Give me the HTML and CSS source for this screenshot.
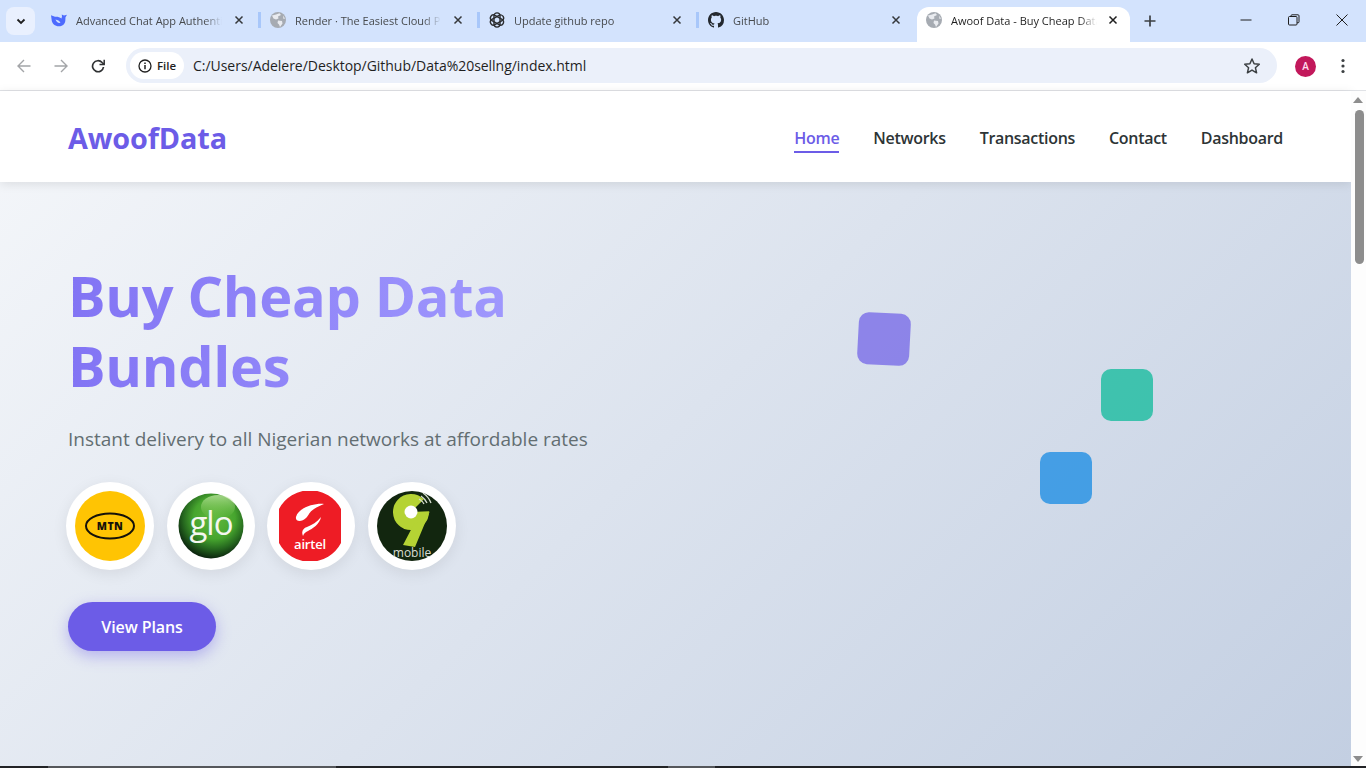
FILE: index.html
```html
<!DOCTYPE html>
<html lang="en">
<head>
<meta charset="utf-8">
<title>Awoof Data - Buy Cheap Data</title>
<link rel="stylesheet" href="styles.css">
</head>
<body>
<svg class="defs" width="0" height="0"><defs>
  <g id="globe"><circle cx="8" cy="8" r="8" fill="#a6abb2"/><path d="M2 3.500 6 2.500 9.500 1.200 11 3 8 4.500 8.500 6.500 6 7.500 3.500 6.500zM8 8.500l4 .5.500 2.500-2.500 3.500-1-2.500-1.500-1.500zM13 3.500l2 3-1.500.5z" fill="#e9ebef"/></g>
  <path id="x" d="M1.500 1.500l7 7M8.500 1.500l-7 7" fill="none" stroke-width="1.500"/>
</defs></svg>
<div class="browser">
  <div class="tabstrip">
    <button class="tabsearch"><svg width="12" height="12" viewBox="0 0 12 12"><path d="M2.500 4.500 6 8l3.500-3.500" fill="none" stroke="#1f1f1f" stroke-width="1.800"/></svg></button>
    <div class="tab">
      <svg class="fav" viewBox="0 0 16 16"><path d="M0 3.200 4 4.800C6 4.400 8.500 5 10.500 6.500L11 4.200 10.700 2.500 13 3.400 16 2.800 14.500 5.200 14.300 9C13.800 12.500 11 14.300 8 14.300 4 14.300 .8 11.500 .6 7.500z" fill="#4d6bfe"/><path d="M4.500 7.500c2 .3 4 1.500 5 3.300-2.200.6-4.300-1-5-3.300z" fill="#d3e3fd"/></svg>
      <span class="title">Advanced Chat App Authentication</span>
      <svg class="close" viewBox="0 0 10 10"><use href="#x"/></svg><i class="sep"></i>
    </div>
    <div class="tab">
      <svg class="fav" viewBox="0 0 16 16"><use href="#globe"/></svg>
      <span class="title">Render · The Easiest Cloud Platform</span>
      <svg class="close" viewBox="0 0 10 10"><use href="#x"/></svg><i class="sep"></i>
    </div>
    <div class="tab">
      <svg class="fav" viewBox="0 0 16 16" fill="none" stroke="#2b2d30" stroke-width="1.400"><rect x="5" y=".9" width="6" height="14.200" rx="3"/><rect x="5" y=".9" width="6" height="14.200" rx="3" transform="rotate(60 8 8)"/><rect x="5" y=".9" width="6" height="14.200" rx="3" transform="rotate(120 8 8)"/></svg>
      <span class="title">Update github repo</span>
      <svg class="close" viewBox="0 0 10 10"><use href="#x"/></svg><i class="sep"></i>
    </div>
    <div class="tab">
      <svg class="fav" viewBox="0 0 16 16"><path fill="#24292f" d="M8 0C3.58 0 0 3.58 0 8c0 3.54 2.29 6.53 5.47 7.59.4.07.55-.17.55-.38 0-.19-.01-.82-.01-1.49-2.010.37-2.530-.49-2.690-.94-.09-.23-.48-.94-.82-1.130-.28-.15-.68-.52-.01-.53.63-.01 1.080.58 1.230.82.72 1.210 1.870.87 2.330.66.07-.52.28-.87.51-1.070-1.780-.2-3.640-.89-3.640-3.950 0-.87.31-1.590.82-2.150-.08-.2-.36-1.020.08-2.120 0 0 .67-.21 2.200.82.64-.18 1.320-.27 2-.27.68 0 1.360.09 2 .27 1.530-1.040 2.200-.82 2.200-.82.44 1.100.16 1.920.08 2.120.51.56.82 1.270.82 2.150 0 3.070-1.870 3.750-3.650 3.950.29.25.54.73.54 1.480 0 1.070-.01 1.930-.01 2.200 0 .21.15.46.55.38A8.013 8.013 0 0 0 16 8c0-4.420-3.580-8-8-8z"/></svg>
      <span class="title">GitHub</span>
      <svg class="close" viewBox="0 0 10 10"><use href="#x"/></svg>
    </div>
    <div class="tab tab-active">
      <svg class="fav" viewBox="0 0 16 16"><use href="#globe"/></svg>
      <span class="title">Awoof Data - Buy Cheap Data Bundles</span>
      <svg class="close" viewBox="0 0 10 10"><use href="#x"/></svg>
    </div>
    <span class="newtab"><svg width="14" height="14" viewBox="0 0 14 14"><path d="M7 1.500v11M1.500 7h11" stroke="#3c4043" stroke-width="1.700"/></svg></span>
    <div class="wincontrols">
      <svg width="12" height="12" viewBox="0 0 12 12"><path d="M.500 6h11" stroke="#1f1f1f"/></svg>
      <svg width="12" height="12" viewBox="0 0 12 12" fill="none" stroke="#1f1f1f"><rect x=".500" y="2.500" width="8.500" height="8.500" rx="1"/><path d="M3 2.500V1.800a1 1 0 0 1 1-1h6a1 1 0 0 1 1 1v6a1 1 0 0 1-1 1h-1"/></svg>
      <svg width="12" height="12" viewBox="0 0 12 12"><path d="M.500.500l11 11M11.500.500l-11 11" stroke="#1f1f1f" fill="none"/></svg>
    </div>
  </div>
  <div class="toolbar">
    <svg class="tool" width="14" height="14" viewBox="0 0 14 14" fill="none" stroke="#a3a5a8" stroke-width="1.400"><path d="M13.500 7H1M7 1 1 7l6 6"/></svg>
    <svg class="tool" width="14" height="14" viewBox="0 0 14 14" fill="none" stroke="#a3a5a8" stroke-width="1.400"><path d="M.500 7H13M7 1l6 6-6 6"/></svg>
    <svg class="tool" width="14" height="14" viewBox="0 0 14 14" fill="none" stroke="#2f3133" stroke-width="1.700"><path d="M12.500 8a5.500 5.500 0 1 1-1.400-4.500L13 5.300"/><path d="M13.200.8v4.700H8.500" stroke-width="1.500"/></svg>
    <div class="omnibox">
      <div class="chip">
        <svg width="14" height="14" viewBox="0 0 14 14" fill="none" stroke="#1f1f1f" stroke-width="1.300"><circle cx="7" cy="7" r="6"/><path d="M7 6v4.200" stroke-width="1.500"/><path d="M7 3.400v1.500" stroke-width="1.500"/></svg>
        <span>File</span>
      </div>
      <span class="url">C:/Users/Adelere/Desktop/Github/Data%20sellng/index.html</span>
      <svg class="star" width="18" height="18" viewBox="0 0 18 18"><path d="M9 2l2.100 4.800 5.200.5-3.900 3.400 1.200 5.100L9 13.100 4.400 15.800l1.200-5.100L1.700 7.300l5.200-.5z" fill="none" stroke="#3c4043" stroke-width="1.500" stroke-linejoin="round"/></svg>
    </div>
    <span class="avatar">A</span>
    <svg class="kebab" width="4" height="16" viewBox="0 0 4 16"><circle cx="2" cy="2.500" r="1.600" fill="#3c4043"/><circle cx="2" cy="8" r="1.600" fill="#3c4043"/><circle cx="2" cy="13.500" r="1.600" fill="#3c4043"/></svg>
  </div>
  <div class="viewport">
    <main class="page">
      <header class="navbar">
        <a class="logo">AwoofData</a>
        <nav class="navlinks">
          <a class="navlink navlink-active">Home</a>
          <a class="navlink">Networks</a>
          <a class="navlink">Transactions</a>
          <a class="navlink">Contact</a>
          <a class="navlink">Dashboard</a>
        </nav>
      </header>
      <section class="hero">
        <div class="hero-text">
          <h1>Buy Cheap Data Bundles</h1>
          <p class="subtitle">Instant delivery to all Nigerian networks at affordable rates</p>
          <div class="networks">
            <div class="netlogo">
              <svg width="70" height="70" viewBox="0 0 70 70"><circle cx="35" cy="35" r="35" fill="#ffc403"/><ellipse cx="35" cy="35" rx="24" ry="12.500" fill="none" stroke="#15120a" stroke-width="2"/><text x="35" y="39" text-anchor="middle" class="mtn-text">MTN</text></svg>
            </div>
            <div class="netlogo">
              <svg width="70" height="70" viewBox="0 0 70 70"><defs><radialGradient id="gloG" cx=".55" cy=".38" r=".64"><stop offset="0" stop-color="#62b83e"/><stop offset=".5" stop-color="#46a52e"/><stop offset=".74" stop-color="#26691f"/><stop offset="1" stop-color="#081c0c"/></radialGradient><linearGradient id="gloH" x1="0" y1="0" x2="0" y2="1"><stop offset="0" stop-color="#cdeeb0" stop-opacity=".7"/><stop offset="1" stop-color="#8fd35a" stop-opacity="0"/></linearGradient></defs><circle cx="35" cy="35" r="32.500" fill="url(#gloG)"/><ellipse cx="42" cy="16" rx="17" ry="12" fill="url(#gloH)"/><text x="35" y="44" text-anchor="middle" class="glo-text">glo</text></svg>
            </div>
            <div class="netlogo">
              <svg width="70" height="70" viewBox="0 0 70 70"><path d="M3 18A35 35 0 0 1 65 18V52A35 35 0 0 1 3 52z" fill="#ee1c25"/><path d="M48 13C38 12 22 17 20 26 19 31 26 31 30 27 33 24 33 21 38 18 41 16 45 14 48 13zM45 26C44 33 36 38 32 40 30 41 28 42 27 45 25 41 27 37 31 36 36 34 41 31 45 26z" fill="#fff"/><text x="34" y="58" text-anchor="middle" class="airtel-text">airtel</text></svg>
            </div>
            <div class="netlogo">
              <svg width="70" height="70" viewBox="0 0 70 70"><circle cx="35" cy="35" r="35" fill="#12260f"/><circle cx="34" cy="21" r="12" fill="none" stroke="#b5d334" stroke-width="12" stroke-dasharray="66 9.400" transform="rotate(-2 34 21)"/><circle cx="34" cy="21" r="6.500" fill="#fff"/><path d="M53 20 38 56 26 54 37 33 46 30z" fill="#b5d334"/><path d="M42 8a13 13 0 0 1 5 5M44 5a17 17 0 0 1 6 7M46 2a21 21 0 0 1 8 10" fill="none" stroke="#d6dccf" stroke-width="1.300"/><text x="35" y="66" text-anchor="middle" class="mobile-text">mobile</text></svg>
            </div>
          </div>
          <a class="cta">View Plans</a>
        </div>
        <div class="hero-art">
          <span class="float float-purple"></span>
          <span class="float float-teal"></span>
          <span class="float float-blue"></span>
        </div>
      </section>
    </main>
    <div class="scrollbar">
      <i class="arrow arrow-up"></i>
      <i class="thumb"></i>
      <i class="arrow arrow-down"></i>
    </div>
  </div>
  <div class="taskedge"><i class="edge-a"></i><i class="edge-b"></i></div>
</div>
</body>
</html>
```

FILE: styles.css
```css
* { box-sizing: border-box; }
html, body { margin: 0; height: 100%; overflow: hidden; }
body { font-family: "Open Sans", "Noto Sans", sans-serif; color: #2d3436; }
a { text-decoration: none; }
.defs { position: absolute; }
.browser { display: flex; flex-direction: column; height: 768px; width: 1366px; }

/* tab strip */
.tabstrip { height: 42px; background: #d3e3fd; display: flex; align-items: flex-start; padding: 7px 0 0 6px; flex: none; }
.tabsearch { width: 29px; height: 28px; margin-right: 6px; border: 0; padding: 0; border-radius: 8px; background: #e9f0fe; display: flex; align-items: center; justify-content: center; flex: none; }
.tab { width: 219px; height: 28px; flex: none; display: flex; align-items: center; padding: 0 0 2px 10px; font-size: 11px; color: #474a4d; }
.fav { width: 16px; height: 16px; flex: none; margin-right: 9px; }
.title { width: 146px; white-space: nowrap; overflow: hidden; flex: none; -webkit-mask-image: linear-gradient(90deg, #000 88%, transparent); mask-image: linear-gradient(90deg, #000 88%, transparent); }
.close { width: 10px; height: 10px; margin-left: 12px; stroke: #35383b; flex: none; }
.sep { width: 3px; height: 16px; margin-left: 14px; background: #a8c7fa; flex: none; }
.tab-active { width: 213px; height: 35px; background: #fff; border-radius: 12px 12px 0 0; margin-bottom: -7px; padding: 0 0 9px 9px; color: #1f1f1f; }
.tab-active .close { margin-left: 11px; stroke: #1f1f1f; }
.newtab { margin: 0 0 0 13px; width: 14px; height: 28px; display: flex; align-items: center; flex: none; }
.wincontrols { margin-left: auto; display: flex; gap: 36px; padding: 0 18px 0 0; height: 26px; align-items: center; }

/* toolbar */
.toolbar { height: 49px; flex: none; background: #fff; border-bottom: 1px solid #e0e2e6; border-radius: 8px 8px 0 0; display: flex; align-items: center; padding: 0 0 0 17px; }
.tool { margin-right: 23px; flex: none; }
.tool:nth-child(3) { margin-right: 21px; }
.omnibox { width: 1151px; height: 35px; margin-bottom: 1px; background: #ebf0fa; border-radius: 18px; display: flex; align-items: center; padding-left: 4px; flex: none; }
.chip { height: 27px; width: 54px; background: #fff; border-radius: 14px; display: flex; align-items: center; justify-content: center; gap: 5px; font-size: 11.500px; font-weight: 600; color: #1f1f1f; flex: none; }
.url { font-size: 14px; color: #1f1f1f; margin-left: 9px; letter-spacing: -.03px; white-space: nowrap; }
.star { margin-left: auto; margin-right: 16px; }
.avatar { width: 21px; height: 21px; margin-left: 18px; border-radius: 50%; background: #c2185b; color: #fde; font-size: 10px; font-weight: 600; display: flex; align-items: center; justify-content: center; flex: none; }
.kebab { margin-left: 25px; flex: none; }

/* page */
.viewport { flex: 1; display: flex; min-height: 0; }
.page { width: 1351px; flex: none; display: flex; flex-direction: column; background: linear-gradient(135deg, #f5f7fa 0%, #c3cfe2 100%); }
.navbar { height: 91px; flex: none; background: #fff; box-shadow: 0 2px 10px rgba(0,0,0,.1); display: flex; align-items: center; justify-content: space-between; padding: 0 68px; position: relative; }
.logo { font-size: 28.800px; font-weight: 700; color: #6c5ce7; letter-spacing: -.1px; padding-top: 2px; }
.navlinks { display: flex; gap: 34px; margin-top: 7px; }
.navlink { font-size: 16px; font-weight: 600; color: #2d3436; padding-bottom: 2px; letter-spacing: -.3px; border-bottom: 2px solid transparent; }
.navlink-active { color: #6c5ce7; border-bottom-color: #6c5ce7; }

.hero { flex: 1; display: flex; padding: 78px 68px 0; }
.hero-text { width: 608px; flex: none; }
h1 { margin: 0; font-size: 56px; line-height: 70px; font-weight: 700; letter-spacing: -.35px; background: linear-gradient(90deg, #8274f4 0%, #a29bfe 80%); -webkit-background-clip: text; background-clip: text; color: transparent; }
.subtitle { margin: 24px 0 0; font-size: 19px; line-height: 30px; color: #636e72; }
.networks { display: flex; gap: 12.600px; margin: 28px 0 0 -2px; }
.netlogo { width: 88px; height: 88px; border-radius: 50%; background: #fff; box-shadow: 0 4px 15px rgba(0,0,0,.08); display: flex; align-items: center; justify-content: center; flex: none; }
.mtn-text { font: 800 10.500px "Open Sans", sans-serif; fill: #15120a; letter-spacing: .4px; }
.glo-text { font: 500 33px "Open Sans", sans-serif; fill: #f4f7ef; letter-spacing: -1px; }
.airtel-text { font: 600 13px "Open Sans", sans-serif; fill: #fff; letter-spacing: -.2px; }
.mobile-text { font: 500 12px "Open Sans", sans-serif; fill: #d8ddd2; }
.cta { display: flex; width: 148px; height: 49px; margin-top: 32px; align-items: center; justify-content: center; border-radius: 25px; background: #6c5ce7; color: #fff; font-size: 16px; font-weight: 600; letter-spacing: -.1px; box-shadow: 0 5px 15px rgba(108,92,231,.4); }

.hero-art { flex: 1; position: relative; }
.float { position: absolute; width: 52px; height: 52px; border-radius: 10px; opacity: .7; }
.float-purple { left: 182px; top: 53px; background: #6c5ce7; transform: rotate(3deg); }
.float-teal { left: 425px; top: 109px; background: #00b894; }
.float-blue { left: 364px; top: 192px; background: #0984e3; }

/* scrollbar */
.scrollbar { flex: 1; background: #fdfdfd; position: relative; }
.thumb { position: absolute; left: 4px; top: 19px; width: 9px; height: 154px; background: #8d8d8d; border-radius: 5px; }
.arrow { position: absolute; left: 2px; width: 0; height: 0; border-left: 5.500px solid transparent; border-right: 5.500px solid transparent; }
.arrow-up { top: 6px; border-bottom: 6px solid #8d8d8d; }
.arrow-down { bottom: 4px; border-top: 6px solid #8d8d8d; }

.taskedge { height: 2px; flex: none; background: #222326; position: relative; }
.edge-a { position: absolute; left: 48px; width: 288px; height: 2px; background: #55575b; }
.edge-b { position: absolute; left: 668px; width: 47px; height: 2px; background: #55575b; }
```
